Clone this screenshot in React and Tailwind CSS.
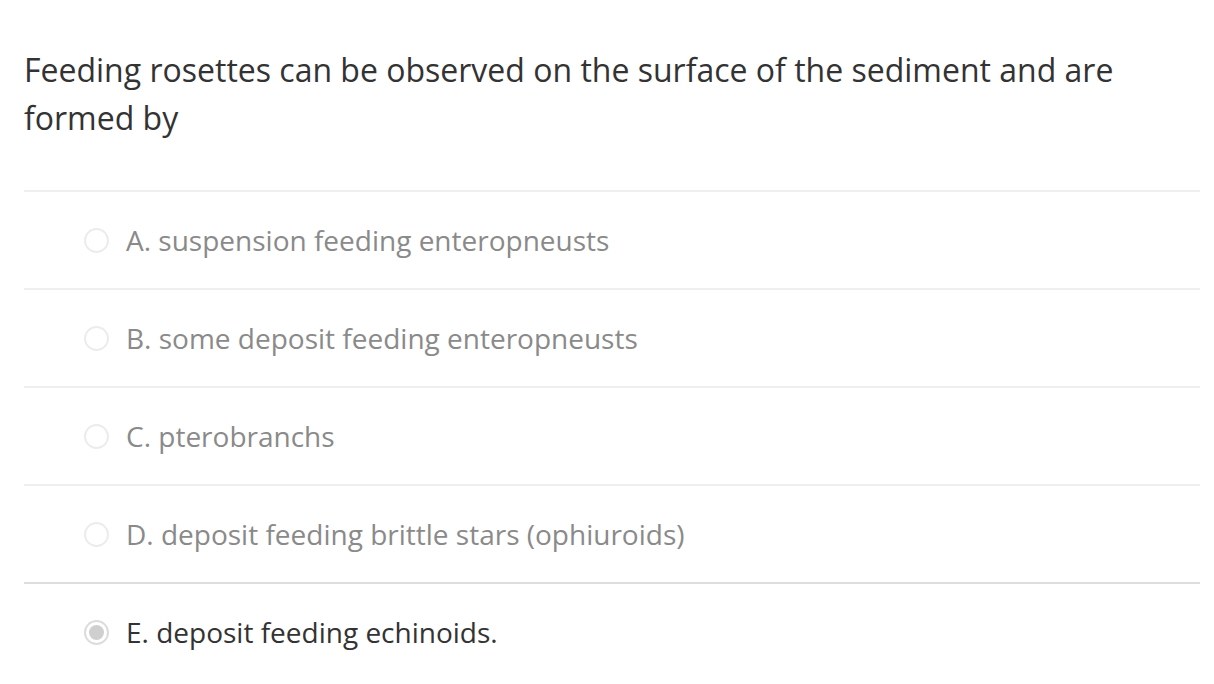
const OPTIONS = [
  { id: "A", text: "A. suspension feeding enteropneusts" },
  { id: "B", text: "B. some deposit feeding enteropneusts" },
  { id: "C", text: "C. pterobranchs" },
  { id: "D", text: "D. deposit feeding brittle stars (ophiuroids)" },
  { id: "E", text: "E. deposit feeding echinoids.", selected: true },
];

function Radio({ selected }) {
  if (selected) {
    return (
      <span className="flex h-[25px] w-[25px] shrink-0 items-center justify-center rounded-full border-[2px] border-[#dcdcdc] bg-white">
        <span className="h-[15px] w-[15px] rounded-full bg-[#cfcfcf]" />
      </span>
    );
  }
  return <span className="h-[25px] w-[25px] shrink-0 rounded-full border-[2px] border-[#ececec] bg-white" />;
}

export default function App() {
  return (
    <div className="min-h-[684px] bg-white pl-6 pr-[14px] pt-[46px] font-['Open_Sans',sans-serif]">
      <h1 className="pr-[80px] text-[32px] leading-[48px] text-[#333333]">
        Feeding rosettes can be observed on the surface of the sediment and are formed by
      </h1>
      <div className="mt-[48px]">
        {OPTIONS.map((opt) => (
          <div
            key={opt.id}
            className={`flex h-[98px] items-center gap-[17px] border-t-2 pl-[60px] ${
              opt.selected ? "border-[#dddddd]" : "border-[#efefef]"
            }`}
          >
            <Radio selected={opt.selected} />
            <span
              className={`text-[28px] ${opt.selected ? "text-[#333333]" : "text-[#8a8a8a]"}`}
            >
              {opt.text}
            </span>
          </div>
        ))}
      </div>
    </div>
  );
}
